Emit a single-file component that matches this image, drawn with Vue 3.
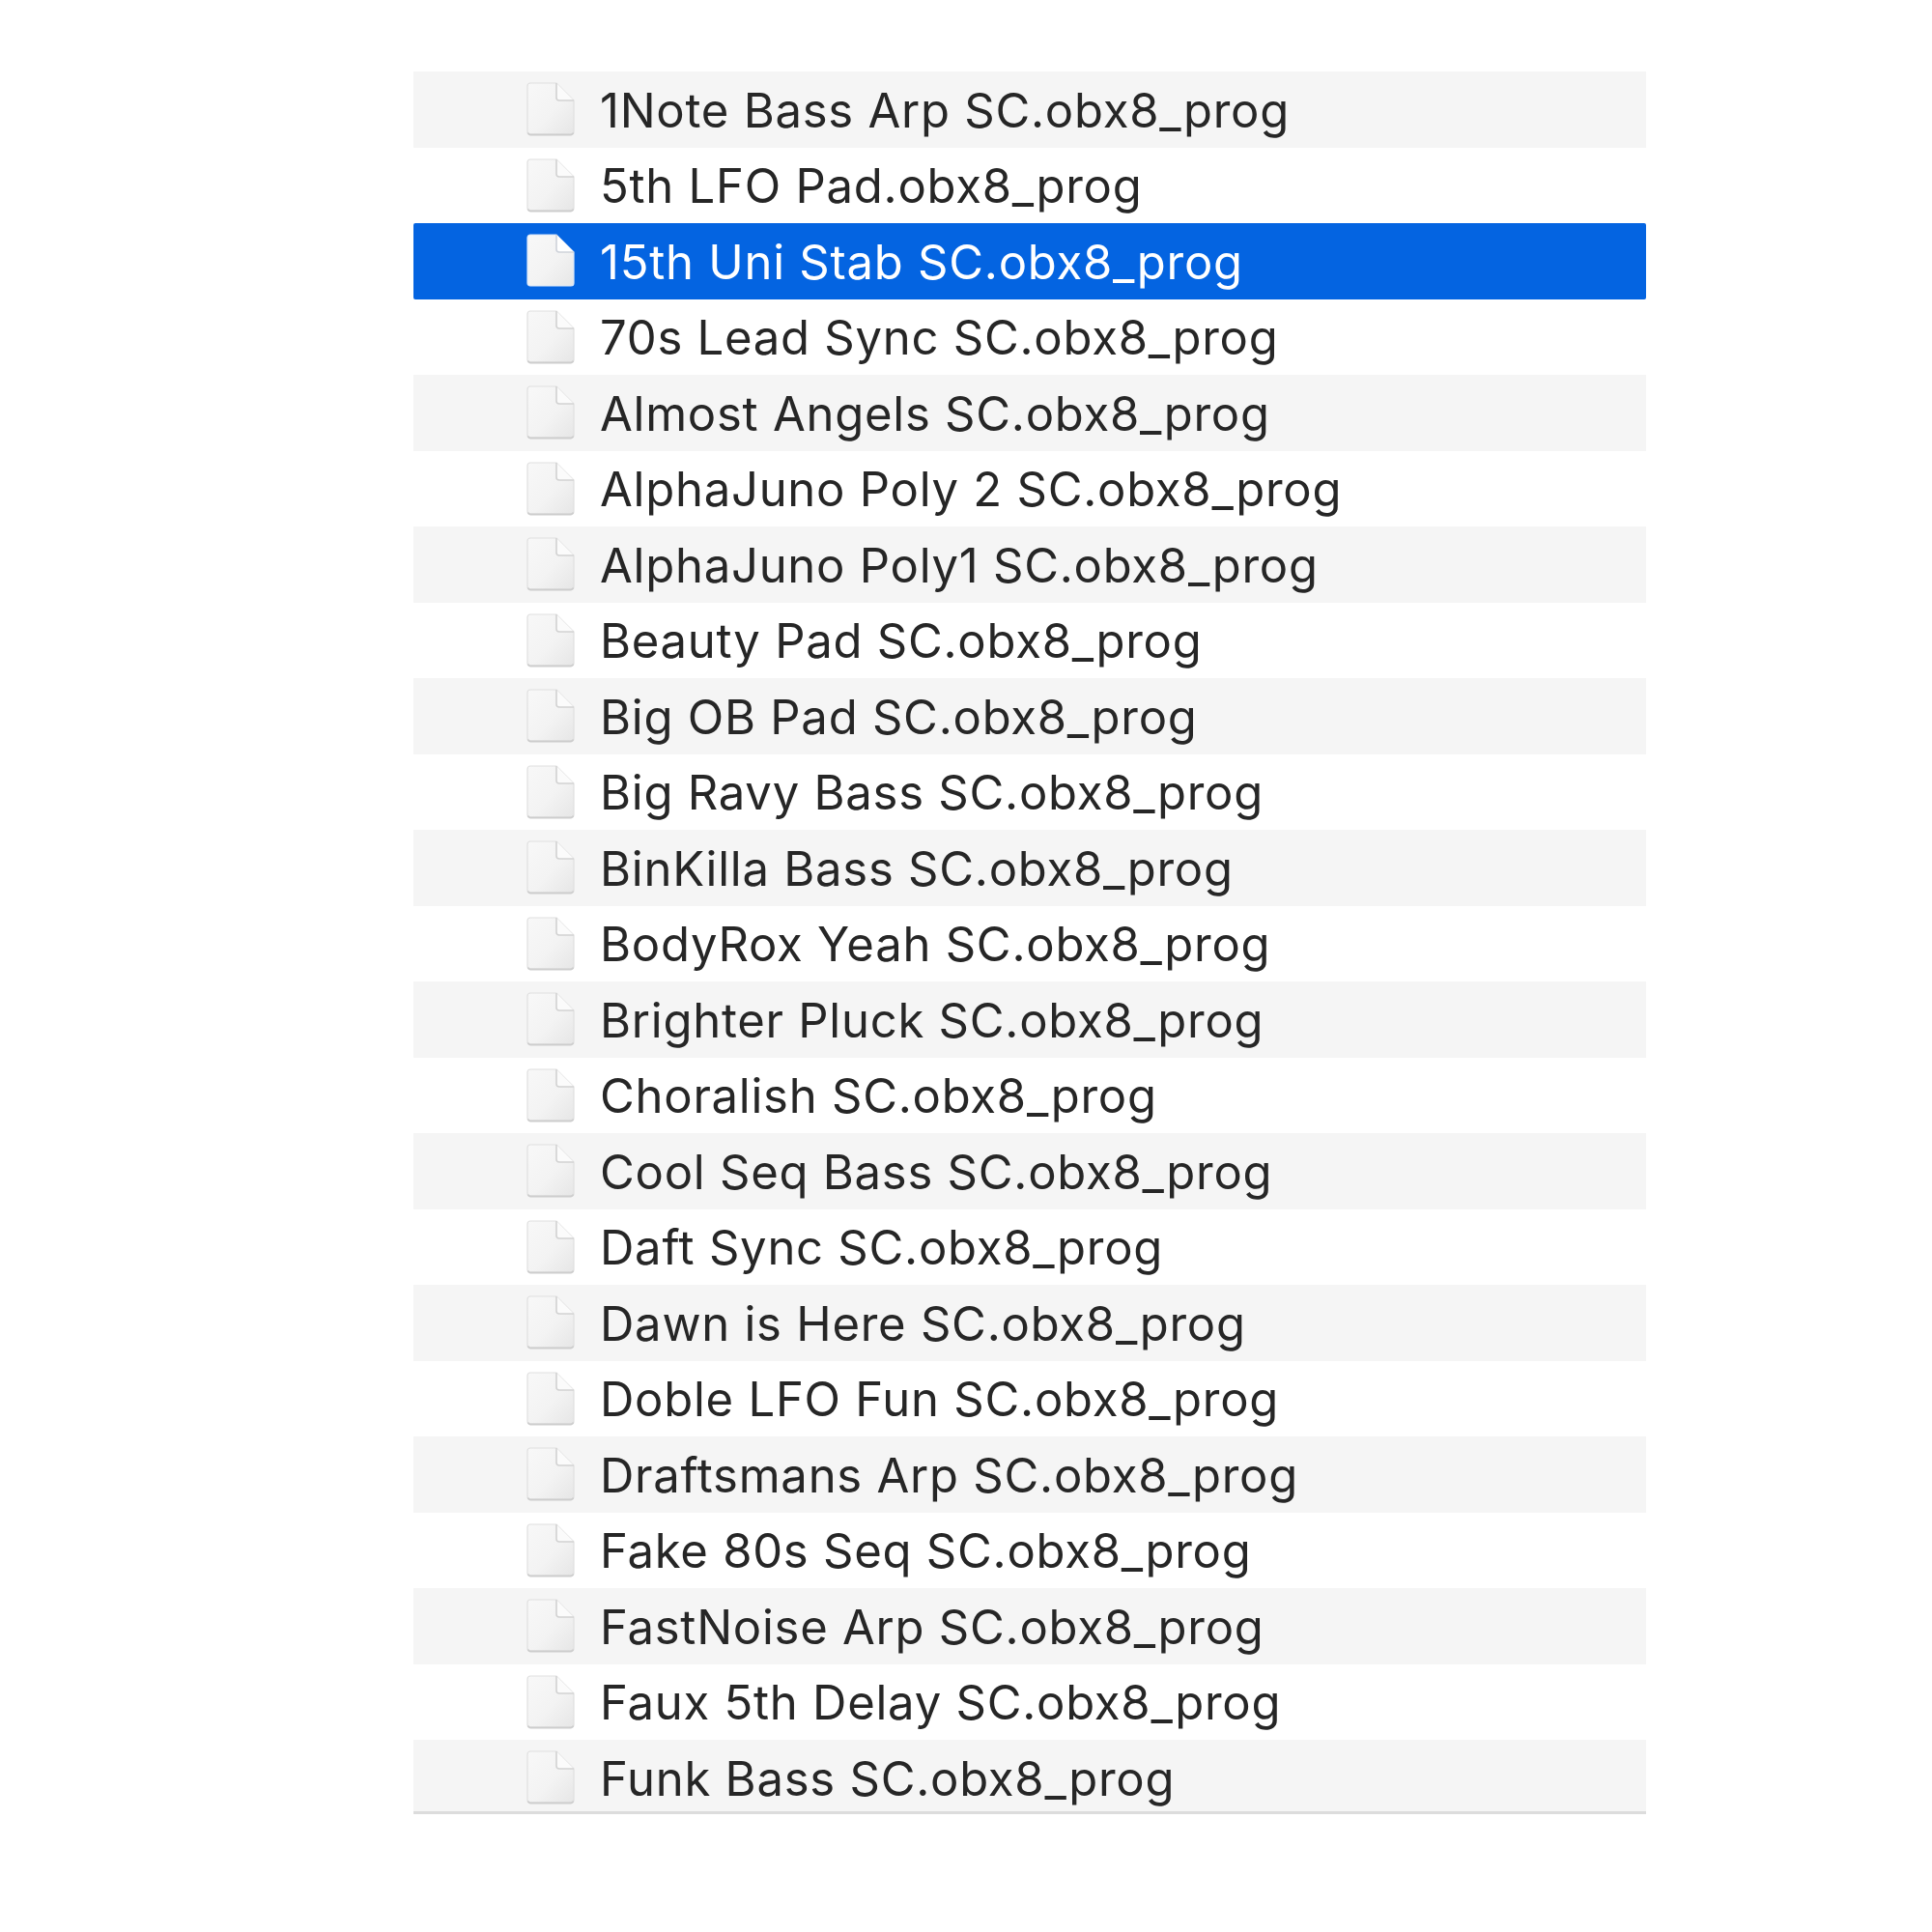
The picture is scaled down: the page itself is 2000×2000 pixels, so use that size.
<template>
  <div class="page">
    <svg class="defs" width="0" height="0">
      <defs>
        <linearGradient id="sheetFill" x1="0" y1="0" x2="1" y2="1">
          <stop offset="0" stop-color="#f8f8f8" />
          <stop offset="0.55" stop-color="#f3f3f3" />
          <stop offset="1" stop-color="#e6e6e6" />
        </linearGradient>
      </defs>
    </svg>
    <div class="list">
      <div
        v-for="(name, i) in files"
        :key="name"
        class="row"
        :class="{ striped: i % 2 === 0, selected: i === selectedIndex }"
      >
        <svg class="icon" viewBox="0 0 50 56" width="50" height="56">
          <path
            class="sheet"
            d="M4 1H31L49 19V51a3 3 0 0 1-3 3H4a3 3 0 0 1-3-3V4a3 3 0 0 1 3-3Z"
          />
          <path class="edge" d="M1.500 52.500a3 3 0 0 0 2.500 2H46a3 3 0 0 0 2.500-2" />
          <path class="fold" d="M31 1V16a3 3 0 0 0 3 3H49Z" />
          <path class="crease" d="M31 1V16a3 3 0 0 0 3 3H49" />
        </svg>
        <span class="name">{{ name }}</span>
      </div>
    </div>
  </div>
</template>

<script setup>
const selectedIndex = 2

const files = [
  '1Note Bass Arp SC.obx8_prog',
  '5th LFO Pad.obx8_prog',
  '15th Uni Stab SC.obx8_prog',
  '70s Lead Sync SC.obx8_prog',
  'Almost Angels SC.obx8_prog',
  'AlphaJuno Poly 2 SC.obx8_prog',
  'AlphaJuno Poly1 SC.obx8_prog',
  'Beauty Pad SC.obx8_prog',
  'Big OB Pad SC.obx8_prog',
  'Big Ravy Bass SC.obx8_prog',
  'BinKilla Bass SC.obx8_prog',
  'BodyRox Yeah SC.obx8_prog',
  'Brighter Pluck SC.obx8_prog',
  'Choralish SC.obx8_prog',
  'Cool Seq Bass SC.obx8_prog',
  'Daft Sync SC.obx8_prog',
  'Dawn is Here SC.obx8_prog',
  'Doble LFO Fun SC.obx8_prog',
  'Draftsmans Arp SC.obx8_prog',
  'Fake 80s Seq SC.obx8_prog',
  'FastNoise Arp SC.obx8_prog',
  'Faux 5th Delay SC.obx8_prog',
  'Funk Bass SC.obx8_prog'
]
</script>

<style>
body {
  background: #fff;
}
</style>

<style scoped>
.page {
  width: 2000px;
  height: 2000px;
  padding: 74px 0 0 428px;
  box-sizing: border-box;
  background: #fff;
}

.defs {
  display: block;
}

.list {
  width: 1276px;
  height: 1801px;
  overflow: hidden;
  border-bottom: 3px solid #dcdcdc;
  font-family: Inter, "Liberation Sans", sans-serif;
  filter: blur(0.5px);
}

.row {
  height: 78.5px;
  display: flex;
  align-items: center;
  padding-left: 117px;
  gap: 26px;
  color: #262626;
  background: #fff;
}

.striped {
  background: #f5f5f5;
}

.selected {
  background: #0464e1;
  color: #fff;
  border-radius: 2px;
}

.icon {
  flex: none;
}

.sheet {
  fill: url(#sheetFill);
  stroke: #dfdfdf;
  stroke-width: 1.2;
}

.edge {
  fill: none;
  stroke: #cdcdcd;
  stroke-width: 2;
}

.fold {
  fill: #fbfbfb;
}

.crease {
  fill: none;
  stroke: #d2d2d2;
  stroke-width: 1.600;
}

.selected .sheet {
  stroke: #dbe8fa;
}

.selected .edge {
  stroke: none;
}

.selected .fold {
  fill: #fff;
}

.selected .crease {
  stroke: #cfd3da;
}

.name {
  font-size: 49px;
  letter-spacing: 0.75px;
  line-height: 1;
  white-space: nowrap;
  position: relative;
  top: 1px;
}
</style>
